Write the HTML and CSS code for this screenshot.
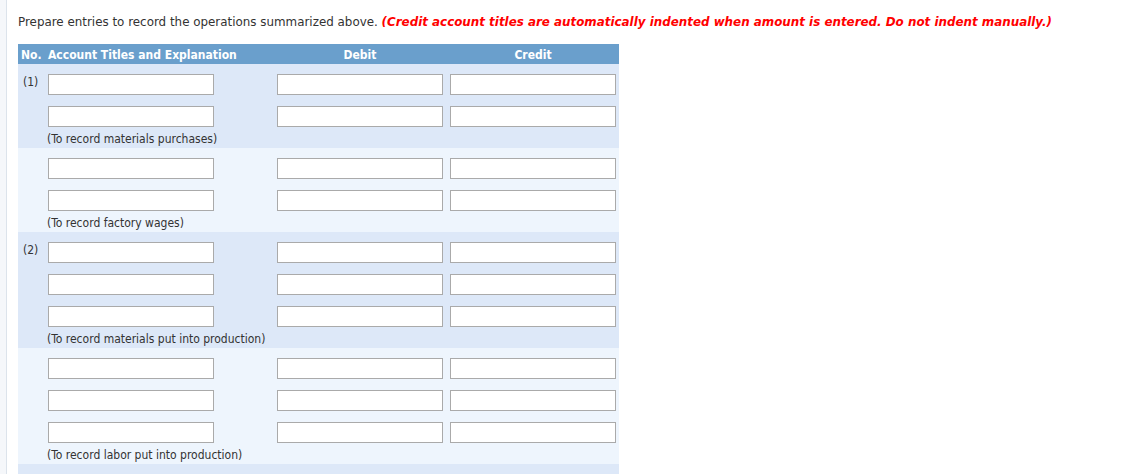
FILE: index.html
```html
<!DOCTYPE html>
<html lang="en">
<head>
<meta charset="utf-8">
<title>Journal entries</title>
<link rel="stylesheet" href="styles.css">
</head>
<body>
<div class="page">
  <p class="instr">Prepare entries to record the operations summarized above. <em class="warn">(Credit account titles are automatically indented when amount is entered. Do not indent manually.)</em></p>

  <div class="journal">
    <div class="jhead">
      <span class="h-no">No.</span>
      <span class="h-acct">Account Titles and Explanation</span>
      <span class="h-amt">Debit</span>
      <span class="h-amt">Credit</span>
    </div>

    <div class="entry dark">
      <div class="line"><span class="no">(1)</span><input class="acct" type="text"><input class="amt" type="text"><input class="amt" type="text"></div>
      <div class="line"><span class="no"></span><input class="acct" type="text"><input class="amt" type="text"><input class="amt" type="text"></div>
      <div class="note">(To record materials purchases)</div>
    </div>

    <div class="entry light">
      <div class="line"><span class="no"></span><input class="acct" type="text"><input class="amt" type="text"><input class="amt" type="text"></div>
      <div class="line"><span class="no"></span><input class="acct" type="text"><input class="amt" type="text"><input class="amt" type="text"></div>
      <div class="note">(To record factory wages)</div>
    </div>

    <div class="entry dark">
      <div class="line"><span class="no">(2)</span><input class="acct" type="text"><input class="amt" type="text"><input class="amt" type="text"></div>
      <div class="line"><span class="no"></span><input class="acct" type="text"><input class="amt" type="text"><input class="amt" type="text"></div>
      <div class="line"><span class="no"></span><input class="acct" type="text"><input class="amt" type="text"><input class="amt" type="text"></div>
      <div class="note">(To record materials put into production)</div>
    </div>

    <div class="entry light">
      <div class="line"><span class="no"></span><input class="acct" type="text"><input class="amt" type="text"><input class="amt" type="text"></div>
      <div class="line"><span class="no"></span><input class="acct" type="text"><input class="amt" type="text"><input class="amt" type="text"></div>
      <div class="line"><span class="no"></span><input class="acct" type="text"><input class="amt" type="text"><input class="amt" type="text"></div>
      <div class="note">(To record labor put into production)</div>
    </div>

    <div class="entry dark">
      <div class="line"><span class="no"></span><input class="acct" type="text"><input class="amt" type="text"><input class="amt" type="text"></div>
    </div>
  </div>
</div>
</body>
</html>
```

FILE: styles.css
```css
html, body {
  margin: 0;
  padding: 0;
}

body {
  background: #f5f7fa;
  font-family: "DejaVu Sans Condensed", "DejaVu Sans", sans-serif;
  font-size: 12px;
  color: #333;
  overflow: hidden;
}

.page {
  margin-left: 6px;
  border-left: 1px solid #dce3eb;
  background: #fff;
  min-height: 100vh;
  padding: 15px 0 0 11px;
  box-sizing: border-box;
}

.instr {
  margin: 0 0 14px;
  line-height: 15px;
  font-family: "DejaVu Sans", sans-serif;
  font-size: 11.9px;
}

.warn {
  color: #f00;
  font-weight: bold;
  font-style: italic;
}

.journal {
  width: 601px;
}

.jhead,
.line {
  display: grid;
  grid-template-columns: 30px 229px 173px 169px;
}

.jhead {
  background: #6a9fcc;
  color: #fff;
  font-weight: bold;
  height: 20px;
  line-height: 22px;
  overflow: hidden;
}

.h-no {
  padding-left: 3px;
}

.h-amt {
  width: 166px;
  text-align: center;
}

.entry {
  padding-top: 10px;
}

.dark {
  background: #dde8f8;
}

.light {
  background: #eef5fd;
}

.line + .line {
  margin-top: 11px;
}

.no {
  padding-left: 5px;
  line-height: 15px;
  align-self: start;
  padding-top: 1px;
}

.acct,
.amt {
  width: 166px;
  height: 21px;
  box-sizing: border-box;
  border: 1px solid #aaa;
  background: #fff;
  margin: 0;
  padding: 0 3px;
  font: inherit;
}

.note {
  height: 19px;
  padding-top: 2px;
  line-height: 21px;
  padding-left: 29px;
}
```
